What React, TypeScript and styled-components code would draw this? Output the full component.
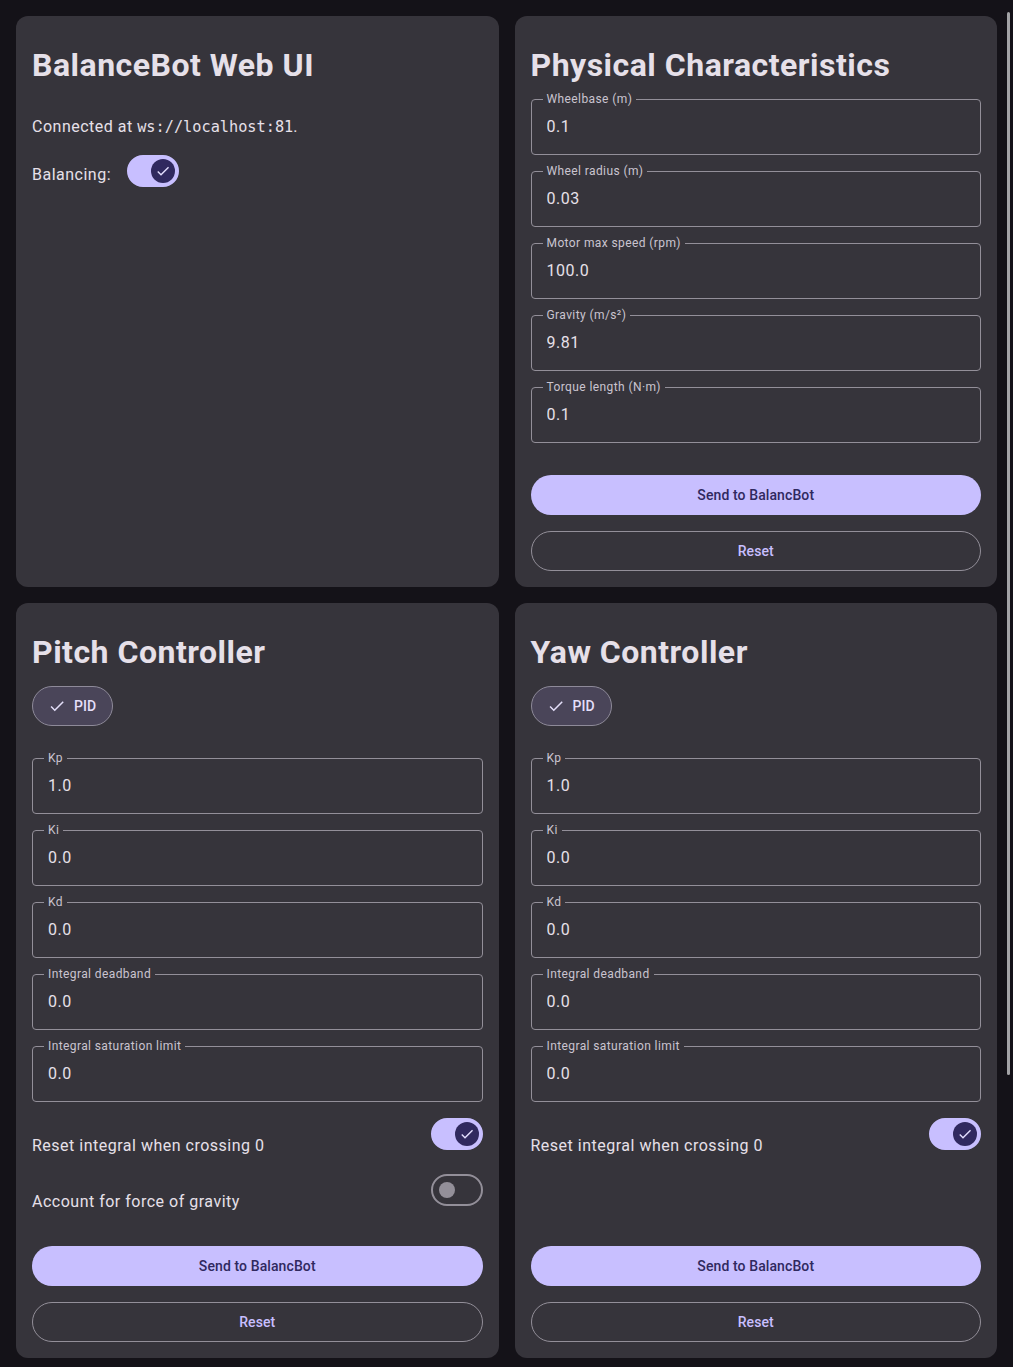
import * as React from 'react'
import styled, { createGlobalStyle } from 'styled-components'

const GlobalStyle = createGlobalStyle`
    html, body {
        margin: 0;
        padding: 0;
        background: #141218;
        overflow: hidden;
    }
    body {
        font-family: Roboto, 'Noto Sans', sans-serif;
        color: #e6e0e9;
    }
`

const Page = styled.main`
    display: grid;
    grid-template-columns: 1fr 1fr;
    gap: 16px;
    padding: 16px;
`

const Card = styled.section`
    background: #36343b;
    border-radius: 12px;
    padding: 16px;
    display: flex;
    flex-direction: column;
    gap: 16px;
`

const Title = styled.h1`
    margin: 13px 0 -2px;
    font-size: 32px;
    line-height: 40px;
    font-weight: 700;
    letter-spacing: 0.5px;
    color: #e6e0e9;
`

const BodyText = styled.p`
    margin: 16px 0 0;
    font-size: 16px;
    line-height: 24px;
    letter-spacing: 0.5px;
`

const Code = styled.code`
    font-family: 'DejaVu Sans Mono', 'Liberation Mono', monospace;
    font-size: 15.25px;
    letter-spacing: 0;
`

const InlineSwitchRow = styled.div`
    display: flex;
    align-items: flex-end;
    gap: 16px;
`

const RowText = styled.span`
    font-size: 16px;
    line-height: 24px;
    letter-spacing: 0.5px;
    color: #e6e0e9;
`

const SwitchRow = styled.div`
    display: flex;
    justify-content: space-between;
    height: 40px;

    & > ${RowText} {
        align-self: flex-end;
    }
`

const Track = styled.button<{ $on: boolean }>`
    box-sizing: border-box;
    flex-shrink: 0;
    width: 52px;
    height: 32px;
    border-radius: 16px;
    margin: 0;
    padding: 0 ${(p) => (p.$on ? '2px' : '6px')};
    display: flex;
    align-items: center;
    justify-content: ${(p) => (p.$on ? 'flex-end' : 'flex-start')};
    background: ${(p) => (p.$on ? '#c8bfff' : 'transparent')};
    border: 2px solid ${(p) => (p.$on ? '#c8bfff' : '#938f99')};
    cursor: pointer;
`

const Thumb = styled.span<{ $on: boolean }>`
    width: ${(p) => (p.$on ? '24px' : '16px')};
    height: ${(p) => (p.$on ? '24px' : '16px')};
    border-radius: 50%;
    background: ${(p) => (p.$on ? '#30295f' : '#938f99')};
    display: flex;
    align-items: center;
    justify-content: center;
    color: #e4dfff;
`

const Chip = styled.button`
    align-self: flex-start;
    box-sizing: border-box;
    height: 40px;
    margin: 0 0 16px;
    padding: 0 16px 0 15px;
    border: 1px solid #8e8a99;
    border-radius: 20px;
    background: #4a4559;
    color: #e4dff9;
    display: inline-flex;
    align-items: center;
    gap: 8px;
    font-family: Roboto, sans-serif;
    font-size: 14px;
    font-weight: 500;
    letter-spacing: 0.1px;
`

const Field = styled.div`
    position: relative;
    box-sizing: border-box;
    height: 56px;
    border: 1px solid #938f99;
    border-radius: 4px;
    padding: 0 15px;
    display: flex;
    align-items: center;
`

const FieldLabel = styled.label`
    position: absolute;
    top: -9px;
    left: 11px;
    padding: 0 4px;
    background: #36343b;
    font-size: 12px;
    line-height: 16px;
    letter-spacing: 0.4px;
    color: #cac4d0;
`

const FieldInput = styled.input`
    flex: 1;
    min-width: 0;
    padding: 0;
    border: 0;
    outline: none;
    background: transparent;
    color: #e6e0e9;
    font-family: Roboto, sans-serif;
    font-size: 16px;
    line-height: 24px;
    letter-spacing: 0.5px;
`

const ButtonGroup = styled.div`
    margin-top: auto;
    padding-top: 16px;
    display: flex;
    flex-direction: column;
    gap: 16px;
`

const Button = styled.button<{ $variant: 'filled' | 'outlined' }>`
    box-sizing: border-box;
    height: 40px;
    padding: 0 0 1px;
    border-radius: 20px;
    font-family: Roboto, sans-serif;
    font-size: 14px;
    font-weight: 500;
    letter-spacing: 0.1px;
    cursor: pointer;
    background: ${(p) => (p.$variant === 'filled' ? '#c8bfff' : 'transparent')};
    color: ${(p) => (p.$variant === 'filled' ? '#30295f' : '#c8bfff')};
    border: ${(p) => (p.$variant === 'filled' ? 'none' : '1px solid #938f99')};
`

const ScrollThumb = styled.div`
    position: fixed;
    top: 12px;
    right: 3px;
    width: 3px;
    height: 1063px;
    border-radius: 2px;
    background: #a3a3a6;
`

const CheckIcon: React.FC<{ size: number }> = ({ size }) => (
    <svg width={size} height={size} viewBox='0 0 24 24' fill='currentColor'>
        <path d='M9 16.17 4.83 12l-1.42 1.41L9 19 21 7l-1.41-1.41z' />
    </svg>
)

const Switch: React.FC<{ on: boolean }> = ({ on }) => (
    <Track $on={on} role='switch' aria-checked={on}>
        <Thumb $on={on}>{on && <CheckIcon size={16} />}</Thumb>
    </Track>
)

const TextField: React.FC<{ label: string; value: string }> = ({ label, value }) => (
    <Field>
        <FieldLabel>{label}</FieldLabel>
        <FieldInput defaultValue={value} />
    </Field>
)

const Actions: React.FC = () => (
    <ButtonGroup>
        <Button $variant='filled'>Send to BalancBot</Button>
        <Button $variant='outlined'>Reset</Button>
    </ButtonGroup>
)

const physicalFields = [
    { label: 'Wheelbase (m)', value: '0.1' },
    { label: 'Wheel radius (m)', value: '0.03' },
    { label: 'Motor max speed (rpm)', value: '100.0' },
    { label: 'Gravity (m/s²)', value: '9.81' },
    { label: 'Torque length (N·m)', value: '0.1' },
]

const pidFields = [
    { label: 'Kp', value: '1.0' },
    { label: 'Ki', value: '0.0' },
    { label: 'Kd', value: '0.0' },
    { label: 'Integral deadband', value: '0.0' },
    { label: 'Integral saturation limit', value: '0.0' },
]

const Controller: React.FC<{ title: string; gravity?: boolean }> = ({ title, gravity }) => (
    <Card>
        <Title>{title}</Title>
        <Chip>
            <CheckIcon size={18} />
            PID
        </Chip>
        {pidFields.map((f) => (
            <TextField key={f.label} label={f.label} value={f.value} />
        ))}
        <SwitchRow>
            <RowText>Reset integral when crossing 0</RowText>
            <Switch on />
        </SwitchRow>
        {gravity && (
            <SwitchRow>
                <RowText>Account for force of gravity</RowText>
                <Switch on={false} />
            </SwitchRow>
        )}
        <Actions />
    </Card>
)

const App: React.FC = () => (
    <>
        <GlobalStyle />
        <Page>
            <Card>
                <Title>BalanceBot Web UI</Title>
                <BodyText>
                    Connected at <Code>ws://localhost:81</Code>.
                </BodyText>
                <InlineSwitchRow>
                    <RowText>Balancing:</RowText>
                    <Switch on />
                </InlineSwitchRow>
            </Card>
            <Card>
                <Title>Physical Characteristics</Title>
                {physicalFields.map((f) => (
                    <TextField key={f.label} label={f.label} value={f.value} />
                ))}
                <Actions />
            </Card>
            <Controller title='Pitch Controller' gravity />
            <Controller title='Yaw Controller' />
        </Page>
        <ScrollThumb />
    </>
)

export default App
